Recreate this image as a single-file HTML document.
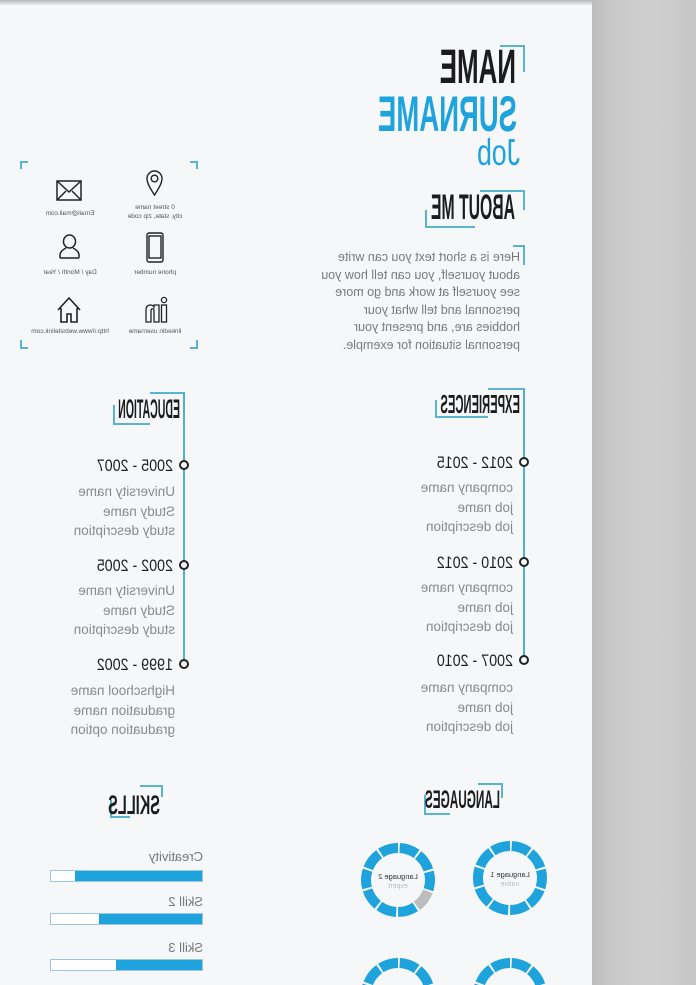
<!DOCTYPE html>
<html><head><meta charset="utf-8"><style>
*{margin:0;padding:0;box-sizing:border-box}
html,body{width:696px;height:985px;overflow:hidden;background:#f6f7f9;font-family:"Liberation Sans",sans-serif;position:relative}
#side{position:absolute;left:592px;top:0;width:104px;height:985px;background:linear-gradient(90deg,#bdbdbd 0,#c9c9c9 20%,#cfcfcf 60%,#c6c6c6 100%)}
#topb{position:absolute;left:0;top:0;width:592px;height:5px;background:linear-gradient(180deg,#b9b9b9,#e8e9eb)}
#m{position:absolute;left:0;top:0;width:696px;height:985px;overflow:hidden;transform:scaleX(-1)}
#m div,#m svg{position:absolute}
.h{font-weight:bold;color:#1c1c1c;white-space:nowrap;transform-origin:left top;line-height:1}
.br{border-color:#5ab4cf;border-style:solid;border-width:0}
.tl{border-top-width:2px;border-left-width:2px}
.rb{border-bottom-width:2px;border-right-width:2px}
.line{background:#4fb0cc;width:2px}
.dot{width:10px;height:10px;border:2px solid #222;border-radius:50%;background:#f6f7f9}
.date{font-size:17px;line-height:20px;color:#1f1f1f;white-space:nowrap;transform:scaleX(.84);transform-origin:left top}
.it{font-size:13.5px;line-height:19.5px;color:#8a8a8a;white-space:nowrap}
.lab{font-size:6.5px;color:#555;text-align:center;line-height:9px;white-space:nowrap}
.bar{height:12px;border:1px solid #9cc9db;background:#fff}
.bar i{position:absolute;left:0;top:0;bottom:0;background:#1ea3dc}
.sk{font-size:13px;color:#777;white-space:nowrap}
</style></head><body>
<div id="topb"></div>
<div id="side"></div>
<div id="m">
<div class="br tl" style="left:171px;top:45px;width:25px;height:27px"></div>
<div class="h" style="left:180px;top:44px;font-size:48px;transform:scaleX(.54)">NAME</div>
<div class="h" style="left:179px;top:89px;font-size:50px;color:#1ea3dc;transform:scaleX(.55)">SURNAME</div>
<div style="left:176px;top:133px;font-size:37px;line-height:40px;color:#1ea3dc;transform:scaleX(.72);transform-origin:left top">Job</div>
<div class="br tl" style="left:171px;top:190px;width:45px;height:20px"></div>
<div class="br rb" style="left:221px;top:210px;width:50px;height:18px"></div>
<div class="h" style="left:181px;top:190px;font-size:35px;transform:scaleX(.45)">ABOUT ME</div>
<div class="br tl" style="left:171px;top:245px;width:12px;height:20px"></div>
<div style="left:176px;top:249px;font-size:12.5px;line-height:17.6px;color:#7a7a7a;width:200px">Here is a short text you can write about yourself, you can tell how you see yourself at work and go more personnal and tell what your hobbies are, and present your personnal situation for exemple.</div>
<div class="br tl" style="left:498px;top:161px;width:8px;height:8px"></div>
<div class="br" style="left:668px;top:161px;width:8px;height:8px;border-top-width:2px;border-right-width:2px"></div>
<div class="br" style="left:498px;top:340px;width:8px;height:9px;border-bottom-width:2px;border-left-width:2px"></div>
<div class="br rb" style="left:668px;top:340px;width:8px;height:9px"></div>
<svg style="left:614px;top:180px" width="26" height="21" viewBox="0 0 26 21" fill="none" stroke="#222" stroke-width="1.5"><rect x="1" y="1" width="24" height="19"/><path d="M1 1l12 11 12-11M1 20l9-9M25 20l-9-9"/></svg>
<div class="lab" style="left:586px;top:209px;width:80px">Email@mail.com</div>
<svg style="left:533px;top:170px" width="17" height="26" viewBox="0 0 17 26" fill="none" stroke="#222" stroke-width="1.4"><path d="M8.5 25C4 18 1 13 1 8.5a7.5 7.5 0 0 1 15 0C16 13 13 18 8.5 25z"/><circle cx="8.5" cy="8.5" r="3.3"/></svg>
<div class="lab" style="left:501px;top:203px;width:80px">0 street name<br>city, state, zip code</div>
<svg style="left:616px;top:234px" width="21" height="25" viewBox="0 0 21 25" fill="none" stroke="#222" stroke-width="1.5"><ellipse cx="10.5" cy="7.5" rx="6" ry="6.5"/><path d="M1 24v-3c0-4 4-6 6-7M20 24v-3c0-4-4-6-6-7M1 24h19"/></svg>
<div class="lab" style="left:586px;top:268px;width:80px">Day / Month / Year</div>
<svg style="left:532px;top:232px" width="18" height="31" viewBox="0 0 18 31" fill="none" stroke="#222" stroke-width="1.4"><rect x="1" y="1" width="16" height="29" rx="2"/><rect x="3" y="4" width="12" height="22"/></svg>
<div class="lab" style="left:501px;top:268px;width:80px">phone number</div>
<svg style="left:615px;top:297px" width="24" height="26" viewBox="0 0 24 26" fill="none" stroke="#222" stroke-width="1.6"><path d="M1 13L12 1l11 12M4 11v14h6v-8h4v8h6V11"/></svg>
<div class="lab" style="left:576px;top:327px;width:100px">http://www.websitelink.com</div>
<svg style="left:528px;top:296px" width="23" height="27" viewBox="0 0 23 27" fill="none" stroke="#222" stroke-width="1.3"><circle cx="4" cy="4" r="2.6"/><rect x="1.5" y="9" width="5" height="17"/><path d="M9 26V9h5v2c2-3 8-3 8 3v12h-5V15c0-3-3-3-3 0v11z"/></svg>
<div class="lab" style="left:501px;top:327px;width:80px">linkedin username</div>
<div class="br tl" style="left:171px;top:388px;width:37px;height:4px"></div>
<div class="line" style="left:171px;top:388px;height:270px"></div>
<div class="br rb" style="left:208px;top:400px;width:53px;height:18px"></div>
<div class="h" style="left:176px;top:391px;font-size:26px;transform:scaleX(.43)">EXPERIENCES</div>
<div class="dot" style="left:167px;top:457px"></div>
<div class="dot" style="left:167px;top:557px"></div>
<div class="dot" style="left:167px;top:655px"></div>
<div class="date" style="left:183px;top:453px">2012 - 2015</div>
<div class="it" style="left:183px;top:478px">company name<br>job name<br>job description</div>
<div class="date" style="left:183px;top:553px">2010 - 2012</div>
<div class="it" style="left:183px;top:578px">company name<br>job name<br>job description</div>
<div class="date" style="left:183px;top:651px">2007 - 2010</div>
<div class="it" style="left:183px;top:678px">company name<br>job name<br>job description</div>
<div class="br tl" style="left:511px;top:392px;width:35px;height:4px"></div>
<div class="line" style="left:511px;top:392px;height:270px"></div>
<div class="br rb" style="left:546px;top:405px;width:37px;height:20px"></div>
<div class="h" style="left:516px;top:396px;font-size:27px;transform:scaleX(.39)">EDUCATION</div>
<div class="dot" style="left:507px;top:460px"></div>
<div class="dot" style="left:507px;top:560px"></div>
<div class="dot" style="left:507px;top:659px"></div>
<div class="date" style="left:523px;top:456px">2005 - 2007</div>
<div class="it" style="left:521px;top:482px">University name<br>Study name<br>study description</div>
<div class="date" style="left:523px;top:556px">2002 - 2005</div>
<div class="it" style="left:521px;top:581px">University name<br>Study name<br>study description</div>
<div class="date" style="left:523px;top:655px">1999 - 2002</div>
<div class="it" style="left:521px;top:681px">Highschool name<br>graduation name<br>graduation option</div>
<div class="br tl" style="left:193px;top:783px;width:25px;height:15px"></div>
<div class="br rb" style="left:246px;top:795px;width:26px;height:20px"></div>
<div class="h" style="left:196px;top:788px;font-size:25px;transform:scaleX(.47)">LANGUAGES</div>
<svg style="left:146px;top:838px" width="80" height="80" viewBox="0 0 80 80"><circle cx="40" cy="40" r="32" fill="none" stroke="#1ea3dc" stroke-width="10" stroke-dasharray="18.1 2" transform="rotate(-90 40 40)"/><text x="40" y="39" font-size="7.5" text-anchor="middle" fill="#333" font-family="Liberation Sans">Language 1</text><text x="40" y="48" font-size="7" text-anchor="middle" fill="#bbb" font-family="Liberation Sans">native</text></svg>
<svg style="left:258px;top:840px" width="80" height="80" viewBox="0 0 80 80"><circle cx="40" cy="40" r="32" fill="none" stroke="#1ea3dc" stroke-width="10" stroke-dasharray="18.1 2" transform="rotate(-90 40 40)"/><circle cx="40" cy="40" r="32" fill="none" stroke="#bdbdbd" stroke-width="10" stroke-dasharray="0 120.6 18.1 200" transform="rotate(-90 40 40)"/><text x="40" y="39" font-size="7.5" text-anchor="middle" fill="#333" font-family="Liberation Sans">Language 2</text><text x="40" y="48" font-size="7" text-anchor="middle" fill="#bbb" font-family="Liberation Sans">expert</text></svg>
<svg style="left:146px;top:955px" width="80" height="30" viewBox="0 0 80 30"><circle cx="40" cy="40" r="32" fill="none" stroke="#1ea3dc" stroke-width="10" stroke-dasharray="18.1 2" transform="rotate(-90 40 40)"/></svg>
<svg style="left:258px;top:955px" width="80" height="30" viewBox="0 0 80 30"><circle cx="40" cy="40" r="32" fill="none" stroke="#1ea3dc" stroke-width="10" stroke-dasharray="18.1 2" transform="rotate(-90 40 40)"/></svg>
<div class="br tl" style="left:533px;top:785px;width:23px;height:12px"></div>
<div class="br rb" style="left:566px;top:800px;width:20px;height:18px"></div>
<div class="h" style="left:536px;top:792px;font-size:27px;transform:scaleX(.54)">SKILLS</div>
<div class="sk" style="left:493px;top:849px">Creativity</div>
<div class="bar" style="left:493px;top:870px;width:153px"><i style="width:127px"></i></div>
<div class="sk" style="left:493px;top:894px">Skill 2</div>
<div class="bar" style="left:493px;top:913px;width:153px"><i style="width:103px"></i></div>
<div class="sk" style="left:493px;top:940px">Skill 3</div>
<div class="bar" style="left:493px;top:959px;width:153px"><i style="width:86px"></i></div>
</div>
</body></html>
